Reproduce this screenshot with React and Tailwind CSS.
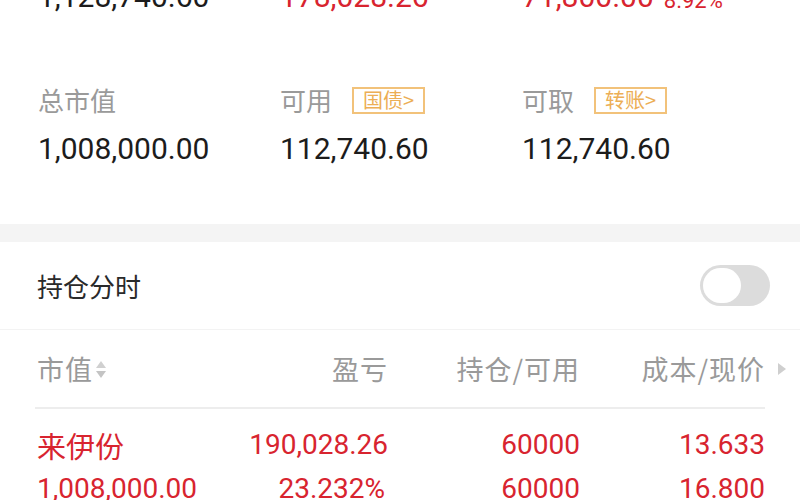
const NUM = { fontFamily: 'Roboto, "Noto Sans CJK SC", sans-serif' }

function Badge({ children }) {
  return (
    <span className="ml-[20px] flex h-[27px] items-center border-2 border-[#f2c27a] px-[9px] text-[20px] leading-none text-[#ecae55]">
      {children}
    </span>
  )
}

function Stat({ label, badge, value }) {
  return (
    <div className="w-[242px] shrink-0">
      <div className="flex h-[30px] items-center">
        <span className="text-[26px] leading-none text-[#9a9a9a]">{label}</span>
        {badge && <Badge>{badge}</Badge>}
      </div>
      <div className="mt-[19px] text-[30px] leading-none text-[#1c1c1c]" style={NUM}>{value}</div>
    </div>
  )
}

function SortIcon() {
  return (
    <svg width="12" height="22" viewBox="0 0 12 22" className="ml-[2px]">
      <path d="M6 3 L11 10 L1 10 Z" fill="#d0d0d0" />
      <path d="M6 20 L11 13 L1 13 Z" fill="#c4c4c4" />
    </svg>
  )
}

export default function App() {
  return (
    <div
      className="h-[500px] w-[800px] overflow-hidden bg-white"
      style={{ fontFamily: '"Noto Sans CJK SC", Roboto, sans-serif' }}
    >
      {/* 截断的上一行 */}
      <div className="mt-[-22px] flex h-[34px] items-end pl-[38px] text-[30px] leading-none" style={NUM}>
        <span className="w-[242px] shrink-0 text-[#1c1c1c]">1,128,740.60</span>
        <span className="w-[242px] shrink-0 text-[#d8242f]">178,028.26</span>
        <span className="flex items-end text-[#d8242f]">
          71,800.00
          <span className="ml-[10px] text-[22px]">8.92%</span>
        </span>
      </div>

      <div className="mt-[73px] flex pl-[38px]">
        <Stat label="总市值" value="1,008,000.00" />
        <Stat label="可用" badge="国债>" value="112,740.60" />
        <Stat label="可取" badge="转账>" value="112,740.60" />
      </div>

      <div className="mt-[60px] h-[18px] bg-[#f4f4f4]" />

      <div className="flex h-[88px] items-center justify-between border-b border-[#f3f3f3] pl-[37px] pr-[30px]">
        <span className="text-[26px] leading-none text-[#2a2a2a]">持仓分时</span>
        <div className="flex h-[41px] w-[70px] items-center rounded-full bg-[#dcdcdc] p-[3px]">
          <div className="h-[35px] w-[38px] rounded-full bg-white" />
        </div>
      </div>

      <div className="mx-[35px] flex h-[79px] items-center border-b-2 border-[#ededed] text-[27px] leading-none tracking-[1px] text-[#9a9a9a]">
        <span className="flex w-[180px] shrink-0 items-center pl-[2px]">市值<SortIcon /></span>
        <span className="w-[173px] shrink-0 text-right">盈亏</span>
        <span className="w-[192px] shrink-0 text-right">持仓/可用</span>
        <span className="w-[185px] shrink-0 text-right">成本/现价</span>
        <svg width="10" height="14" viewBox="0 0 10 14" className="ml-[12px] shrink-0">
          <path d="M1 1 L9 7 L1 13 Z" fill="#cfcfcf" />
        </svg>
      </div>

      <div className="mx-[35px] pt-[18px] text-[28px] leading-none text-[#d8242f]" style={NUM}>
        <div className="flex h-[36px] items-center">
          <span className="w-[180px] shrink-0 pl-[2px] text-[29px]" style={{ fontFamily: '"Noto Sans CJK SC", sans-serif' }}>来伊份</span>
          <span className="w-[173px] shrink-0 text-right">190,028.26</span>
          <span className="w-[192px] shrink-0 text-right">60000</span>
          <span className="w-[185px] shrink-0 text-right">13.633</span>
        </div>
        <div className="mt-[8px] flex h-[36px] items-center">
          <span className="w-[180px] shrink-0 pl-[2px]">1,008,000.00</span>
          <span className="w-[170px] shrink-0 text-right">23.232%</span>
          <span className="w-[195px] shrink-0 text-right">60000</span>
          <span className="w-[185px] shrink-0 text-right">16.800</span>
        </div>
      </div>
    </div>
  )
}
